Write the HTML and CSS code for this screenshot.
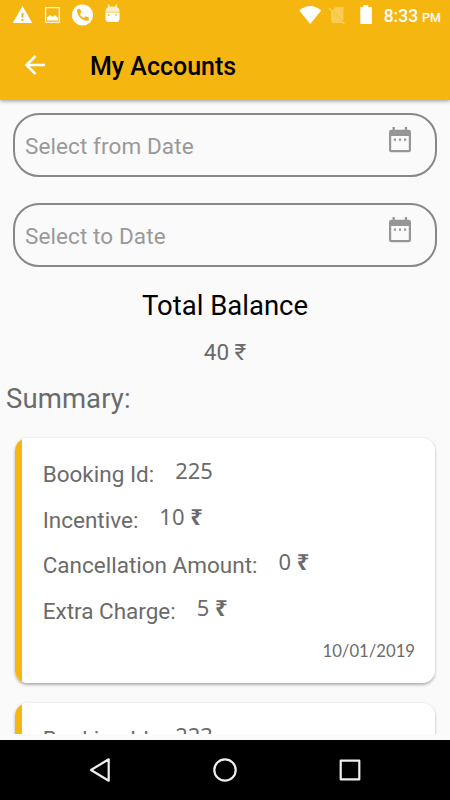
FILE: index.html
```html
<!DOCTYPE html>
<html lang="en">
<head>
<meta charset="utf-8">
<title>My Accounts</title>
<link rel="stylesheet" href="styles.css">
</head>
<body>
<div class="screen">
  <header class="header">
    <div class="status">
      <svg class="status-icons" width="130" height="30" viewBox="0 0 130 30">
        <path fill="#fff" d="M22.5 6 32.3 23H12.7Z"/>
        <path fill="#f5b60f" d="M21.5 13h2v4.500h-2zM21.500 19h2v2h-2z"/>
        <path fill="none" stroke="#fff" stroke-opacity=".85" stroke-width="1.300" d="M45.600 7.700h13.700v14.600H45.600z"/>
        <path fill="#fff" d="M47 20v-2.500l3.200-2.500 2.800 2 2-2 3 3v2.500H47z"/>
        <circle cx="82.500" cy="15" r="10.600" fill="#fff"/>
        <path fill="#f5b60f" d="M77.200 9.200 80 8.800l1.500 3.600-1.700 1.700c.9 1.800 2.200 3 4 3.900l1.700-1.700 3.500 1.500-.4 2.900c-5.900 1.200-12.500-5.500-11.400-11.500z"/>
        <path fill="#fff" d="M105.500 12.500h14v6q0 3.500-3.500 3.500h-7q-3.500 0-3.500-3.500z"/>
        <path fill="#fff" fill-opacity=".8" d="M105.500 11.700q0-4 3-4.700l-1-2.500h1.200l1.300 2h5l1.300-2h1.200l-1 2.500q3 .7 3 4.700z"/>
        <path fill="#f5b60f" d="M108 14.300h1.600v1.400H108zM115.300 14.300h1.600v1.400h-1.600z"/>
      </svg>
      <div class="status-right">
        <svg width="76" height="30" viewBox="298 0 76 30">
          <path fill="#fff" d="M299.200 10.500q11-9 22 0L310.200 24z"/>
          <path fill="#fff" fill-opacity=".3" d="m335.500 7h8v14.200l-11-11zM331 11.300l11.500 11.700H333q-2 0-2-2z"/>
          <path stroke="#fff" stroke-opacity=".35" stroke-width="1.200" d="m329 8 15.500 16"/>
          <path fill="#fff" d="M360.300 7h3V5.300h5V7h3.700v17h-11.700z"/>
        </svg>
        <span class="clock">8:33</span><span class="meridiem">PM</span>
      </div>
    </div>
    <div class="toolbar">
      <svg class="back" width="20" height="20" viewBox="0 0 20 20"><path d="M20 10H2M10.500 1 1.500 10l9 9" fill="none" stroke="#fff" stroke-width="2.500"/></svg>
      <h1 class="title">My Accounts</h1>
    </div>
  </header>
  <main class="content">
    <div class="field"><span>Select from Date</span>
      <svg class="calendar" width="24" height="26" viewBox="0 0 24 26"><path fill="#969696" fill-rule="evenodd" d="M4.500 0h2.300v2.700h10V0h2.300v2.700h1.400q2.500 0 2.500 2.300v18q0 2.300-2.500 2.300h-17Q1 25.300 1 23V5q0-2.300 2.500-2.300h1zM3.200 9v14h17.600V9z"/><path fill="#969696" d="M5.800 11.500H8v2.300H5.800zM10.900 11.500h2.200v2.300h-2.200zM16 11.500h2.200v2.300H16z"/></svg>
    </div>
    <div class="field"><span>Select to Date</span>
      <svg class="calendar" width="24" height="26" viewBox="0 0 24 26"><path fill="#969696" fill-rule="evenodd" d="M4.500 0h2.300v2.700h10V0h2.300v2.700h1.400q2.500 0 2.500 2.300v18q0 2.300-2.500 2.300h-17Q1 25.300 1 23V5q0-2.300 2.500-2.300h1zM3.200 9v14h17.600V9z"/><path fill="#969696" d="M5.800 11.500H8v2.300H5.800zM10.900 11.500h2.200v2.300h-2.200zM16 11.500h2.200v2.300H16z"/></svg>
    </div>
    <div class="total-label">Total Balance</div>
    <div class="total">40 ₹</div>
    <h2 class="summary">Summary:</h2>
    <div class="list">
      <section class="card">
        <div class="row"><span>Booking Id:</span><span class="value">225</span></div>
        <div class="row"><span>Incentive:</span><span class="value">10 <b>₹</b></span></div>
        <div class="row"><span>Cancellation Amount:</span><span class="value">0 <b>₹</b></span></div>
        <div class="row"><span>Extra Charge:</span><span class="value">5 <b>₹</b></span></div>
        <div class="date">10/01/2019</div>
      </section>
      <section class="card">
        <div class="row"><span>Booking Id:</span><span class="value">223</span></div>
      </section>
    </div>
  </main>
  <nav class="nav">
    <svg width="450" height="60" viewBox="0 0 450 60" fill="none" stroke="#eee" stroke-width="2.200" stroke-linejoin="round"><path d="M108.700 19.300v21.400L91 30z"/><circle cx="225" cy="30" r="10.700"/><path d="M340.700 20.700h18.600v18.600h-18.600z"/></svg>
  </nav>
</div>
</body>
</html>
```

FILE: styles.css
```css
* { box-sizing: border-box; }
body { margin: 0; font-family: Roboto, "Noto Sans", sans-serif; }
.screen { width: 450px; height: 800px; display: flex; flex-direction: column; background: #fafafa; overflow: hidden; }
.header { height: 100px; flex: none; background: #f5b60f; box-shadow: 0 1px 4px rgba(0,0,0,.4); }
.status { height: 30px; display: flex; justify-content: space-between; }
.status-right { display: flex; align-items: flex-start; padding-right: 9px; color: #fff; font-weight: 500; }
.status-right svg { margin-right: 10px; }
.clock { font-size: 17.5px; line-height: 32px; }
.meridiem { font-size: 12.5px; line-height: 35px; margin-left: 4px; }
.toolbar { height: 70px; display: flex; align-items: center; padding-left: 25px; }
.title { margin: 3px 0 0 45px; font-size: 25px; line-height: 30px; font-weight: 500; color: #000; }
.content { height: 634px; flex: none; display: flex; flex-direction: column; padding-top: 13px; color: #6b6b6b; overflow: hidden; }
.field { height: 64px; flex: none; margin: 0 13px 26px; padding: 0 23px 0 10px; border: 2px solid #888; border-radius: 26px; display: flex; justify-content: space-between; color: #999; font-size: 22.5px; letter-spacing: .1px; line-height: 62px; }
.calendar { margin-top: 12px; }
.total-label { text-align: center; color: #000; font-size: 27.5px; line-height: 32px; margin-top: -3px; }
.total { text-align: center; font-size: 22.5px; line-height: 28px; margin-top: 16px; }
.summary { margin: 16px 0 0 6px; font-size: 27.5px; line-height: 34px; font-weight: 400; letter-spacing: .1px; }
.list { margin-top: 22px; padding: 0 15px; display: flex; flex-direction: column; gap: 20px; }
.card { height: 245px; flex: none; padding: 13px 20px 0 27.7px; border-radius: 13px; background: linear-gradient(to right, #f5b60f 7.5px, #fff 7.5px); box-shadow: 0 1.5px 3px rgba(0,0,0,.3); }
.row { display: flex; height: 45.6px; font-size: 22.5px; line-height: 46.6px; gap: 21px; }
.value { margin-top: -4px; font-family: "Noto Sans", sans-serif; font-size: 22px; line-height: 46px; }
.date { text-align: right; font-family: Lato, sans-serif; font-size: 16.7px; line-height: 22px; margin-top: 7px; }
.nav { height: 60px; margin-top: auto; background: #000; }
```
